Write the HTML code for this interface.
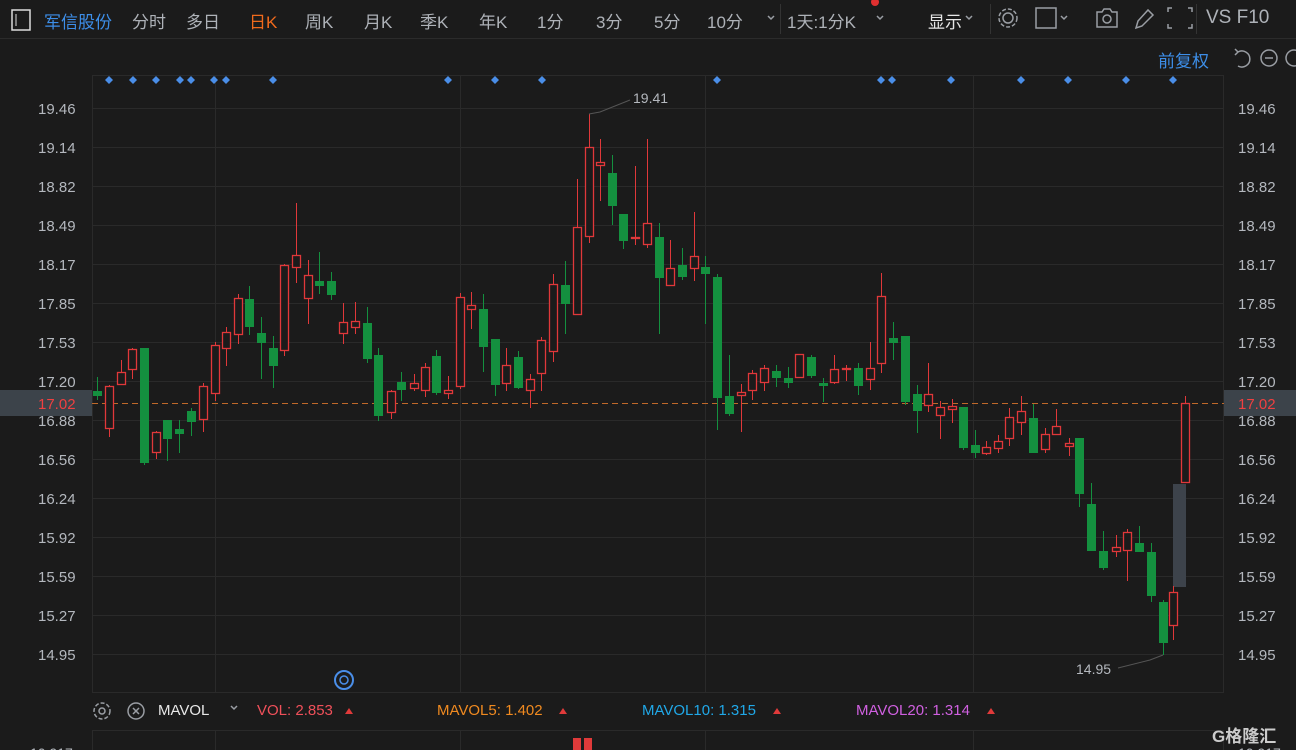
<!DOCTYPE html>
<html><head><meta charset="utf-8"><style>
html,body{margin:0;width:1296px;height:750px;background:#1b1b1b;overflow:hidden;font-family:"Liberation Sans","Noto Sans CJK SC",sans-serif;position:relative}
.t{position:absolute;white-space:nowrap}
.nav{top:8px;font-size:17px;color:#aeb2b8}
.ax{font-size:15px;color:#b4b8be}
</style></head><body>
<svg width="1296" height="750" style="position:absolute;left:0;top:0">
<line x1="0" y1="38.5" x2="1296" y2="38.5" stroke="#2b2b2b"/>
<line x1="780.5" y1="4" x2="780.5" y2="34" stroke="#333"/>
<line x1="990.5" y1="4" x2="990.5" y2="34" stroke="#333"/>
<line x1="1196.5" y1="4" x2="1196.5" y2="34" stroke="#333"/>
<rect x="92.5" y="75.5" width="1131" height="617" fill="none" stroke="#2a2a2a"/>
<rect x="92.5" y="730.5" width="1131" height="40" fill="none" stroke="#2a2a2a"/>
<g stroke="#2a2a2a" id="grid"></g>
<rect x="0" y="390" width="92" height="26" fill="#3c434a"/>
<rect x="1224" y="390" width="72" height="26" fill="#3c434a"/>
<line x1="92" y1="403.5" x2="1224" y2="403.5" stroke="#c0692a" stroke-dasharray="6,4"/>
<rect x="1173" y="484" width="13" height="103" fill="#3d434b"/>
<g id="c"></g>
<polyline points="589,114 600,112 630,100" fill="none" stroke="#555"/>
<polyline points="1163,655 1150,660 1118,668" fill="none" stroke="#555"/>
<g fill="#4a8ee8" id="dm"></g>
<rect x="573" y="738" width="8" height="14" fill="#e03a3a"/><rect x="584" y="738" width="8" height="14" fill="#e03a3a"/>
<rect x="12" y="10" width="18" height="20" fill="none" stroke="#ddd" stroke-width="1.5"/><line x1="16" y1="14" x2="16" y2="26" stroke="#ddd"/>
<g fill="none" stroke="#9a9ea4" stroke-width="1.5">
<circle cx="1008" cy="18" r="5"/><circle cx="1008" cy="18" r="9" stroke-dasharray="4,2"/>
<rect x="1036" y="8" width="20" height="20"/><path d="M1061 16l3 3 3-3"/>
<path d="M1097 12h5l2-3h6l2 3h5v15h-20z"/><circle cx="1107" cy="19" r="4"/>
<path d="M1136 28l2-7 10-11 5 5-11 11z"/>
<path d="M1172 8h-4v4M1188 8h4v4M1172 28h-4v-4M1188 28h4v-4"/>
<path d="M768 16l3 3 3-3M877 16l3 3 3-3M966 16l3 3 3-3M231 706l3 3 3-3"/>
<path d="M1238 52a8 8 0 1 1 0 14M1238 52l-3-3M1238 52l-3 3"/>
<circle cx="1269" cy="58" r="8"/><path d="M1265 58h8"/>
<circle cx="1294" cy="58" r="8"/>
<circle cx="102" cy="711" r="8" stroke-dasharray="4,2"/><circle cx="102" cy="711" r="3"/>
<circle cx="136" cy="711" r="8"/><path d="M133 708l6 6M139 708l-6 6"/>
</g>
<circle cx="344" cy="680" r="9" fill="none" stroke="#4a8ee8" stroke-width="2"/><circle cx="344" cy="680" r="4" fill="none" stroke="#4a8ee8" stroke-width="1.5"/>
<circle cx="875" cy="2" r="4" fill="#e03030"/>
<g fill="#e03a3a"><path d="M345 714l4-6 4 6z"/><path d="M559 714l4-6 4 6z"/><path d="M773 714l4-6 4 6z"/><path d="M987 714l4-6 4 6z"/></g>
</svg>
<div class="t nav" style="left:44px;color:#3d8ee8">军信股份</div>
<div class="t nav" style="left:132px">分时</div>
<div class="t nav" style="left:186px">多日</div>
<div class="t nav" style="left:249px;color:#f06a1c">日K</div>
<div class="t nav" style="left:305px">周K</div>
<div class="t nav" style="left:364px">月K</div>
<div class="t nav" style="left:420px">季K</div>
<div class="t nav" style="left:479px">年K</div>
<div class="t nav" style="left:537px">1分</div>
<div class="t nav" style="left:596px">3分</div>
<div class="t nav" style="left:654px">5分</div>
<div class="t nav" style="left:707px">10分</div>
<div class="t nav" style="left:787px">1天:1分K</div>
<div class="t nav" style="left:928px;color:#e6e6e6">显示</div>
<div class="t nav" style="left:1206px;font-size:19px;top:7px">VS F10</div>
<div class="t" style="left:1158px;top:47px;font-size:17px;color:#3d8ee8">前复权</div>
<div class="t" style="left:633px;top:90px;font-size:14px;color:#b4b8be">19.41</div>
<div class="t" style="left:1076px;top:661px;font-size:14px;color:#b4b8be">14.95</div>
<div id="labels"></div>
<div class="t" style="top:702px;font-size:15px;left:158px;color:#e8e8e8">MAVOL</div>
<div class="t" style="top:702px;font-size:15px;left:257px;color:#f0505a">VOL: 2.853</div>
<div class="t" style="top:702px;font-size:15px;left:437px;color:#f08a20">MAVOL5: 1.402</div>
<div class="t" style="top:702px;font-size:15px;left:642px;color:#20a8e8">MAVOL10: 1.315</div>
<div class="t" style="top:702px;font-size:15px;left:856px;color:#d060e0">MAVOL20: 1.314</div>
<div class="t" style="top:745px;font-size:14px;left:30px;color:#b4b8be">10.917</div>
<div class="t" style="top:745px;font-size:14px;left:1238px;color:#b4b8be">10.917</div>
<div class="t" style="top:722px;font-size:17px;left:1212px;color:#ccc;font-weight:bold">G格隆汇</div>
<script>
var ns="http://www.w3.org/2000/svg";
function el(p,t,a){var e=document.createElementNS(ns,t);for(var k in a)e.setAttribute(k,a[k]);p.appendChild(e);return e}
var labs=["19.46","19.14","18.82","18.49","18.17","17.85","17.53","17.20","16.88","16.56","16.24","15.92","15.59","15.27","14.95"];
var g=document.getElementById("grid"),L=document.getElementById("labels"),h="";
labs.forEach(function(s,i){var y=108+i*39;el(g,"line",{x1:92,x2:1224,y1:y+.5,y2:y+.5});
h+='<div class="t ax" style="left:38px;top:'+(y-7)+'px">'+s+'</div><div class="t ax" style="left:1238px;top:'+(y-7)+'px">'+s+'</div>';});
h+='<div class="t ax" style="left:38px;top:396px;color:#f04040">17.02</div><div class="t ax" style="left:1238px;top:396px;color:#f04040">17.02</div>';
L.innerHTML=h;
[215,460,705,973].forEach(function(x){el(g,"line",{x1:x+.5,x2:x+.5,y1:75,y2:692});el(g,"line",{x1:x+.5,x2:x+.5,y1:730,y2:750})});
var C=[[97,'g',391,395,377,400],[109,'r',386,428,385,437],[121,'r',372,384,360,384],[132,'r',349,369,348,379],[144,'g',348,462,348,465],[156,'r',432,452,431,459],[167,'g',420,438,420,461],[179,'g',429,433,420,453],[191,'g',411,421,408,436],[203,'r',386,419,383,432],[215,'r',345,393,342,401],[226,'r',332,348,327,366],[238,'r',298,334,294,344],[249,'g',299,326,286,335],[261,'g',333,342,317,379],[273,'g',348,365,336,388],[284,'r',265,350,264,356],[296,'r',255,267,203,283],[308,'r',275,298,260,324],[319,'g',281,285,252,294],[331,'g',281,294,272,300],[343,'r',322,333,303,344],[355,'r',321,327,302,334],[367,'g',323,358,307,363],[378,'g',355,415,348,421],[391,'r',391,412,390,419],[401,'g',382,389,372,401],[414,'r',383,388,374,391],[425,'r',367,390,363,397],[436,'g',356,392,350,395],[448,'r',390,393,376,399],[460,'r',297,386,293,389],[471,'r',305,309,292,329],[483,'g',309,346,294,372],[495,'g',339,384,339,396],[506,'r',365,383,348,391],[518,'g',357,387,351,389],[530,'r',379,390,374,408],[541,'r',340,373,337,391],[553,'r',284,351,274,362],[565,'g',285,303,261,334],[577,'r',227,314,179,314],[589,'r',147,236,114,243],[600,'r',162,165,139,201],[612,'g',173,205,155,225],[623,'g',214,240,214,249],[635,'r',237,238,166,245],[647,'r',223,244,139,248],[659,'g',237,277,223,334],[670,'r',268,285,240,285],[682,'g',265,276,248,280],[694,'r',256,268,212,281],[705,'g',267,273,256,324],[717,'g',277,397,274,430],[729,'g',396,413,355,416],[741,'r',392,395,384,432],[752,'r',373,390,370,400],[764,'r',368,382,365,391],[776,'g',371,377,365,387],[788,'g',378,382,367,388],[799,'r',354,377,354,377],[811,'g',357,375,355,378],[823,'g',383,385,378,402],[834,'r',369,382,355,384],[846,'r',368,369,365,381],[858,'g',368,385,363,395],[870,'r',368,379,342,390],[881,'r',296,363,273,373],[893,'g',338,342,322,360],[905,'g',336,401,336,405],[917,'g',394,410,385,433],[928,'r',394,405,363,412],[940,'r',407,415,401,439],[952,'r',406,409,399,423],[963,'g',407,447,407,450],[975,'g',445,452,430,458],[986,'r',447,453,441,455],[998,'r',441,448,435,453],[1009,'r',417,438,408,446],[1021,'r',411,422,396,435],[1033,'g',418,452,404,452],[1045,'r',434,449,428,453],[1056,'r',426,434,409,434],[1069,'r',443,446,438,456],[1079,'g',438,493,438,507],[1091,'g',504,550,483,550],[1103,'g',551,567,531,570],[1116,'r',547,551,535,557],[1127,'r',532,550,529,581],[1139,'g',543,551,526,551],[1151,'g',552,595,543,602],[1163,'g',602,642,600,655],[1173,'r',592,625,586,640],[1185,'r',403,482,396,483]];
var cg=document.getElementById("c");
C.forEach(function(c){var x=c[0],col=c[1]=='r'?'#e0383a':'#14903f';
el(cg,"line",{x1:x+.5,x2:x+.5,y1:c[4],y2:c[5],stroke:col,"stroke-width":1});
var hh=Math.max(c[3]-c[2],1);
if(c[1]=='r'){el(cg,"rect",{x:x-3.5,y:c[2]+.5,width:8,height:hh,fill:"#1b1b1b",stroke:col,"stroke-width":1.3})}
else el(cg,"rect",{x:x-4,y:c[2],width:9,height:hh+1,fill:col});});
var dm=document.getElementById("dm");
[109,133,156,180,191,214,226,273,448,495,542,717,881,892,951,1021,1068,1126,1173].forEach(function(x){el(dm,"path",{d:"M"+x+" 76l4 4-4 4-4-4z"})});
</script>
</body></html>
